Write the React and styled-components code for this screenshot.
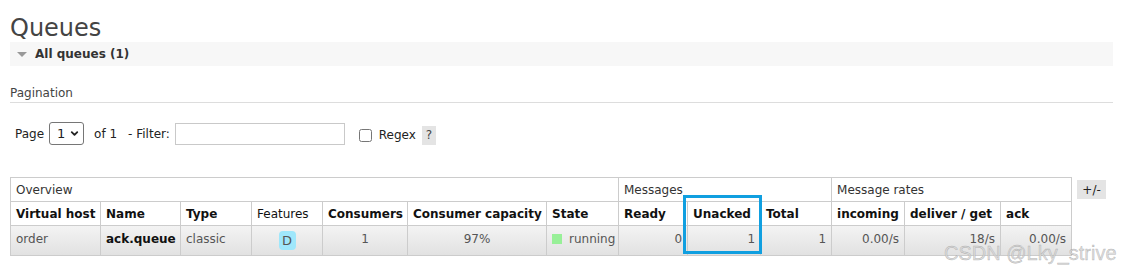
import styled, { createGlobalStyle } from 'styled-components';
import { ChevronDown } from 'lucide-react';

const GlobalStyle = createGlobalStyle`
  html, body {
    margin: 0;
    padding: 0;
    background: #fff;
  }
  body {
    font-family: "DejaVu Sans", Verdana, sans-serif;
    font-size: 12px;
    color: #484848;
  }
`;

const Page = styled.div`
  position: relative;
  box-sizing: border-box;
  width: 1126px;
  min-height: 275px;
  padding: 0 13px 0 10px;
  overflow: hidden;
`;

const Title = styled.h1`
  margin: 15px 0 0;
  font-size: 24px;
  line-height: 27px;
  font-weight: normal;
  color: #444;
`;

const SectionBar = styled.div`
  display: flex;
  align-items: center;
  gap: 8px;
  height: 24px;
  padding-left: 7px;
  background: #f7f7f7;
  font-weight: bold;
  font-size: 12px;
  color: #333;
`;

const Triangle = styled.span`
  width: 0;
  height: 0;
  border-left: 5px solid transparent;
  border-right: 5px solid transparent;
  border-top: 5px solid #999;
`;

const SubHeading = styled.h3`
  margin: 18px 0 0;
  padding: 1px 0 1px;
  font-size: 12px;
  line-height: 16px;
  font-weight: normal;
  color: #444;
  border-bottom: 1px solid #ddd;
`;

const Controls = styled.div`
  display: flex;
  align-items: center;
  height: 23px;
  margin-top: 19px;
  padding-left: 5px;
  color: #222;
`;

const Label = styled.span`
  margin-right: ${p => p.$gap || 0}px;
  margin-top: ${p => p.$drop || 0}px;
`;

const SelectWrap = styled.span`
  position: relative;
  display: inline-flex;
  margin: 0 10px 0 5px;
  svg {
    position: absolute;
    right: 4px;
    top: 6px;
    pointer-events: none;
  }
`;

const Select = styled.select`
  appearance: none;
  width: 35px;
  height: 23px;
  padding: 0 0 0 7px;
  border: 1px solid #767676;
  border-radius: 3px;
  background: #fff;
  font-family: "DejaVu Sans", sans-serif;
  font-size: 13px;
  color: #222;
`;

const FilterInput = styled.input`
  box-sizing: border-box;
  width: 170px;
  height: 22px;
  margin: 0 14px 0 5px;
  border: 1px solid #c9c9c9;
  outline: none;
`;

const Check = styled.input`
  width: 13px;
  height: 13px;
  margin: 3px 7px 0 0;
`;

const Help = styled.span`
  display: inline-flex;
  align-items: center;
  justify-content: center;
  width: 14px;
  height: 19px;
  margin: 3px 0 0 6px;
  background: #e4e4e4;
  color: #444;
`;

const TableRow = styled.div`
  position: relative;
  display: flex;
  align-items: flex-start;
  gap: 5px;
  margin-top: 32px;
`;

const Table = styled.table`
  border-collapse: collapse;
  table-layout: fixed;
  width: 1062px;
  font-size: 12px;
`;

const Col = styled.col`
  width: ${p => p.$w}px;
`;

const Group = styled.th`
  height: 23px;
  padding: 0 5px;
  border: 1px solid #ccc;
  text-align: left;
  font-weight: normal;
  color: #333;
  background: #fff;
`;

const Head = styled.th`
  height: 23px;
  padding: 0 5px;
  border: 1px solid #ccc;
  text-align: left;
  font-weight: ${p => (p.$plain ? 'normal' : 'bold')};
  color: #111;
  background: #fff;
  white-space: nowrap;
`;

const DataRow = styled.tr`
  background: linear-gradient(#f3f3f3, #e1e1e1);
`;

const Cell = styled.td`
  height: 26px;
  padding: 0 5px 3px;
  border: 1px solid #ccc;
  text-align: ${p => p.$align || 'left'};
  font-weight: ${p => (p.$bold ? 'bold' : 'normal')};
  color: ${p => (p.$bold ? '#111' : '#555')};
  white-space: nowrap;
`;

const Badge = styled.span`
  display: inline-flex;
  align-items: center;
  justify-content: center;
  width: 17px;
  height: 19px;
  margin-top: 3px;
  border-radius: 4px;
  background: #9fe7fb;
  color: #555;
  font-size: 13px;
`;

const StateDot = styled.span`
  display: inline-block;
  width: 10px;
  height: 10px;
  margin-right: 7px;
  background: #98f098;
  vertical-align: -1px;
`;

const ToggleBtn = styled.span`
  display: inline-flex;
  align-items: center;
  justify-content: center;
  width: 29px;
  height: 19px;
  margin-top: 3px;
  background: #e4e4e4;
  color: #222;
`;

const Highlight = styled.div`
  position: absolute;
  left: 673px;
  top: 18px;
  width: 73px;
  height: 53px;
  border: 3px solid #109fe0;
`;

const Watermark = styled.div`
  position: absolute;
  left: 934px;
  top: 65px;
  z-index: 2;
  font-family: "Liberation Sans", Arial, sans-serif;
  font-size: 20px;
  line-height: 23px;
  white-space: nowrap;
  color: rgba(215, 215, 215, 0.85);
  -webkit-text-stroke: 0.4px rgba(130, 130, 130, 0.55);
`;

const widths = [90, 80, 71, 71, 85, 139, 72, 69, 73, 71, 73, 96, 71];

export default function App() {
  return (
    <Page>
      <GlobalStyle />
      <Title>Queues</Title>
      <SectionBar>
        <Triangle />
        All queues (1)
      </SectionBar>
      <SubHeading>Pagination</SubHeading>
      <Controls>
        <Label>Page</Label>
        <SelectWrap>
          <Select defaultValue="1">
            <option value="1">1</option>
          </Select>
          <ChevronDown size={11} strokeWidth={4} color="#222" />
        </SelectWrap>
        <Label $gap={11}>of 1</Label>
        <Label>- Filter:</Label>
        <FilterInput type="text" />
        <Check type="checkbox" />
        <Label $drop={3}>Regex</Label>
        <Help>?</Help>
      </Controls>
      <TableRow>
        <Table>
          <colgroup>
            {widths.map((w, i) => (
              <Col key={i} $w={w} />
            ))}
          </colgroup>
          <thead>
            <tr>
              <Group colSpan={7}>Overview</Group>
              <Group colSpan={3}>Messages</Group>
              <Group colSpan={3}>Message rates</Group>
            </tr>
            <tr>
              <Head>Virtual host</Head>
              <Head>Name</Head>
              <Head>Type</Head>
              <Head $plain>Features</Head>
              <Head>Consumers</Head>
              <Head>Consumer capacity</Head>
              <Head>State</Head>
              <Head>Ready</Head>
              <Head>Unacked</Head>
              <Head>Total</Head>
              <Head>incoming</Head>
              <Head>deliver / get</Head>
              <Head>ack</Head>
            </tr>
          </thead>
          <tbody>
            <DataRow>
              <Cell>order</Cell>
              <Cell $bold>ack.queue</Cell>
              <Cell>classic</Cell>
              <Cell $align="center">
                <Badge>D</Badge>
              </Cell>
              <Cell $align="center">1</Cell>
              <Cell $align="center">97%</Cell>
              <Cell>
                <StateDot />
                running
              </Cell>
              <Cell $align="right">0</Cell>
              <Cell $align="right">1</Cell>
              <Cell $align="right">1</Cell>
              <Cell $align="right">0.00/s</Cell>
              <Cell $align="right">18/s</Cell>
              <Cell $align="right">0.00/s</Cell>
            </DataRow>
          </tbody>
        </Table>
        <ToggleBtn>+/-</ToggleBtn>
        <Highlight />
        <Watermark>CSDN @Lky_strive</Watermark>
      </TableRow>
    </Page>
  );
}
